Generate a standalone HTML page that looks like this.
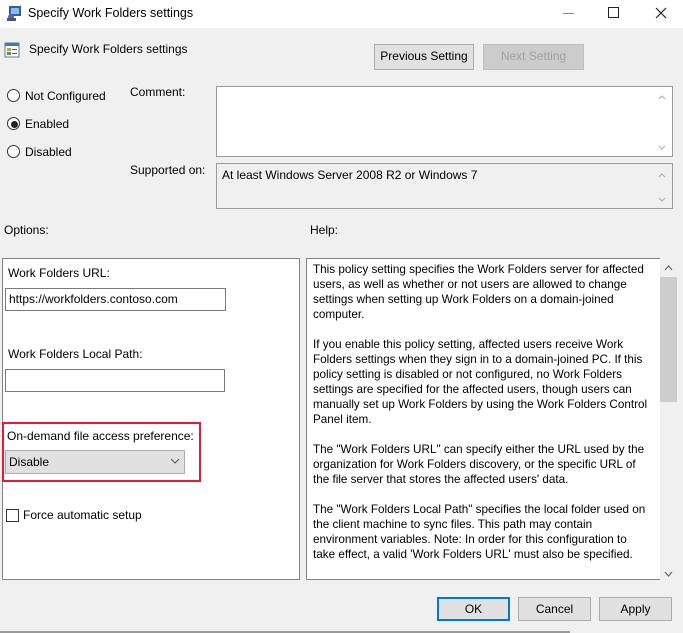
<!DOCTYPE html>
<html><head><meta charset="utf-8"><style>
*{box-sizing:border-box;margin:0;padding:0}
body{width:683px;height:633px;background:#f0f0f0;font-family:"Liberation Sans",sans-serif;font-size:12px;color:#000;position:relative;overflow:hidden}
.a{position:absolute}
.tb{left:0;top:0;width:683px;height:28px;background:#fff}
.box{position:absolute;background:#fff;border:1px solid #adadad}
.btn{position:absolute;background:#e1e1e1;border:1px solid #adadad;text-align:center;line-height:22px}
.radio{position:absolute;width:13px;height:13px;border:1px solid #333;border-radius:50%;background:#fff}
.help div{white-space:nowrap;height:15px;line-height:15px}
</style></head><body>
<div class="a tb"></div>
<svg class="a" style="left:6px;top:5px" width="16" height="16"><rect x="3" y="1" width="12" height="10" fill="#2d5fa8"/><rect x="5" y="3" width="8" height="6" fill="#8fb8e8"/><circle cx="5" cy="12" r="3" fill="#3a6ec0"/><rect x="1" y="13" width="9" height="3" fill="#555"/></svg>
<div class="a" style="left:28px;top:6px;font-size:12.5px">Specify Work Folders settings</div>
<div class="a" style="left:563px;top:13px;width:11px;height:1px;background:#888"></div>
<div class="a" style="left:608px;top:7px;width:11px;height:11px;border:1px solid #222"></div>
<svg class="a" style="left:655px;top:7px" width="12" height="12"><path d="M1 1 L11 11 M11 1 L1 11" stroke="#222" stroke-width="1.2"/></svg>

<svg class="a" style="left:4px;top:42px" width="16" height="16"><rect x="1" y="1" width="14" height="14" fill="#fff" stroke="#5a7a9a"/><rect x="1" y="1" width="14" height="3" fill="#4a76b0"/><rect x="3" y="6" width="4" height="3" fill="#c9a040"/><rect x="3" y="10" width="4" height="3" fill="#4a9a50"/><rect x="8" y="7" width="5" height="1" fill="#555"/><rect x="8" y="11" width="5" height="1" fill="#555"/></svg>
<div class="a" style="left:29px;top:42px">Specify Work Folders settings</div>
<div class="btn" style="left:374px;top:44px;width:100px;height:26px">Previous Setting</div>
<div class="btn" style="left:483px;top:44px;width:101px;height:26px;background:#cccccc;border-color:#bfbfbf;color:#a0a0a0">Next Setting</div>

<div class="radio" style="left:7px;top:89px"></div><div class="a" style="left:25px;top:89px">Not Configured</div>
<div class="radio" style="left:7px;top:117px"></div><div class="a" style="left:11px;top:121px;width:7px;height:7px;border-radius:50%;background:#222"></div><div class="a" style="left:25px;top:117px">Enabled</div>
<div class="radio" style="left:7px;top:145px"></div><div class="a" style="left:25px;top:145px">Disabled</div>

<div class="a" style="left:130px;top:85px">Comment:</div>
<div class="box" style="left:216px;top:86px;width:457px;height:71px;border-color:#9a9a9a"></div>
<svg class="a" style="left:658px;top:95px" width="8" height="5"><path d="M1 4 L4 1 L7 4" fill="none" stroke="#aaa"/></svg>
<svg class="a" style="left:658px;top:145px" width="8" height="5"><path d="M1 1 L4 4 L7 1" fill="none" stroke="#aaa"/></svg>
<div class="a" style="left:130px;top:163px">Supported on:</div>
<div class="box" style="left:216px;top:163px;width:457px;height:46px;background:#f0f0f0;border-color:#9a9a9a"></div>
<div class="a" style="left:222px;top:168px">At least Windows Server 2008 R2 or Windows 7</div>
<svg class="a" style="left:658px;top:173px" width="8" height="5"><path d="M1 4 L4 1 L7 4" fill="none" stroke="#aaa"/></svg>
<svg class="a" style="left:658px;top:197px" width="8" height="5"><path d="M1 1 L4 4 L7 1" fill="none" stroke="#aaa"/></svg>

<div class="a" style="left:4px;top:223px">Options:</div>
<div class="a" style="left:310px;top:223px">Help:</div>

<div class="box" style="left:2px;top:258px;width:298px;height:322px;border-color:#828282"></div>
<div class="a" style="left:8px;top:266px">Work Folders URL:</div>
<div class="box" style="left:5px;top:288px;width:221px;height:23px;border-color:#7a7a7a"></div>
<div class="a" style="left:9px;top:292px">https://workfolders.contoso.com</div>
<div class="a" style="left:8px;top:347px">Work Folders Local Path:</div>
<div class="box" style="left:5px;top:369px;width:220px;height:23px;border-color:#7a7a7a"></div>
<div class="a" style="left:2px;top:422px;width:199px;height:60px;border:2px solid #e8183a"></div>
<div class="a" style="left:7px;top:429px">On-demand file access preference:</div>
<div class="a" style="left:5px;top:450px;width:180px;height:24px;background:#e1e1e1;border:1px solid #adadad"></div>
<div class="a" style="left:9px;top:455px">Disable</div>
<svg class="a" style="left:170px;top:458px" width="10" height="6"><path d="M1 1 L5 5 L9 1" fill="none" stroke="#555" stroke-width="1"/></svg>
<div class="a" style="left:6px;top:509px;width:13px;height:13px;border:1px solid #333;background:#fff"></div>
<div class="a" style="left:23px;top:508px">Force automatic setup</div>

<div class="box help" style="left:306px;top:258px;width:355px;height:322px;border-color:#828282;padding:3px 0 0 6px;overflow:hidden;font-size:11.7px">
<div>This policy setting specifies the Work Folders server for affected</div>
<div>users, as well as whether or not users are allowed to change</div>
<div>settings when setting up Work Folders on a domain-joined</div>
<div>computer.</div><div></div>
<div>If you enable this policy setting, affected users receive Work</div>
<div>Folders settings when they sign in to a domain-joined PC. If this</div>
<div>policy setting is disabled or not configured, no Work Folders</div>
<div>settings are specified for the affected users, though users can</div>
<div>manually set up Work Folders by using the Work Folders Control</div>
<div>Panel item.</div><div></div>
<div>The "Work Folders URL" can specify either the URL used by the</div>
<div>organization for Work Folders discovery, or the specific URL of</div>
<div>the file server that stores the affected users' data.</div><div></div>
<div>The "Work Folders Local Path" specifies the local folder used on</div>
<div>the client machine to sync files. This path may contain</div>
<div>environment variables. Note: In order for this configuration to</div>
<div>take effect, a valid 'Work Folders URL' must also be specified.</div><div></div>
<div>The "On-demand file access preference" option controls whether</div>
</div>
<div class="a" style="left:660px;top:258px;width:18px;height:322px;background:#f0f0f0"></div>
<div class="a" style="left:660px;top:277px;width:17px;height:125px;background:#cdcdcd"></div>
<svg class="a" style="left:664px;top:265px" width="9" height="6"><path d="M1 5 L4.5 1 L8 5" fill="none" stroke="#666" stroke-width="1.2"/></svg>
<svg class="a" style="left:664px;top:571px" width="9" height="6"><path d="M1 1 L4.5 5 L8 1" fill="none" stroke="#666" stroke-width="1.2"/></svg>

<div class="btn" style="left:437px;top:597px;width:73px;height:24px;border:2px solid #0078d7;line-height:20px">OK</div>
<div class="btn" style="left:518px;top:597px;width:73px;height:24px">Cancel</div>
<div class="btn" style="left:599px;top:597px;width:73px;height:24px">Apply</div>
<div class="a" style="left:0;top:631px;width:570px;height:2px;background:#999"></div>
</body></html>
